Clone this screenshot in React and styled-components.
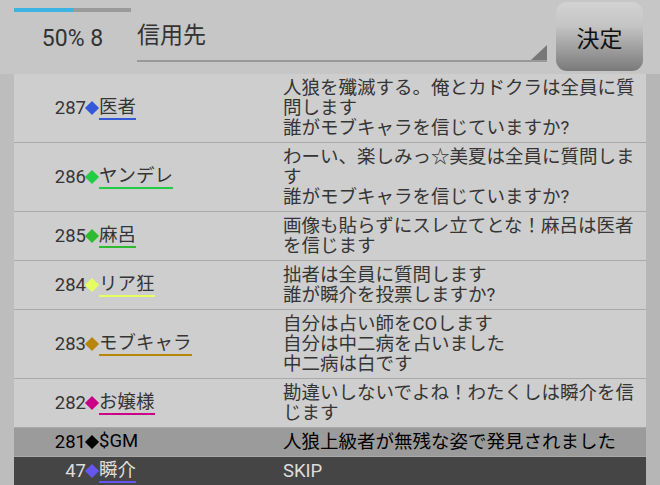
import React from 'react'
import styled, { createGlobalStyle } from 'styled-components'

const GlobalStyle = createGlobalStyle`
  body {
    margin: 0;
    background: #c6c6c6;
    font-family: Roboto, "Noto Sans CJK JP", sans-serif;
    color: #333;
    overflow: hidden;
  }
`

const Page = styled.div`
  width: 660px;
  height: 485px;
  overflow: hidden;
  display: flex;
  flex-direction: column;
`

const Header = styled.div`
  height: 74px;
  display: flex;
  align-items: flex-start;
  flex-shrink: 0;
`

const Progress = styled.div`
  width: 117px;
  margin-left: 14px;
  padding-top: 8px;
  display: flex;
  flex-direction: column;
  align-items: stretch;
`

const Bar = styled.div`
  height: 4px;
  background: #9a9a9a;
  display: flex;
`

const Fill = styled.div`
  height: 100%;
  background: #3db3e4;
`

const Percent = styled.div`
  text-align: center;
  font-size: 23px;
  line-height: 27px;
  margin-top: 13px;
  color: #333;
`

const Spinner = styled.div`
  flex: 1;
  margin-left: 6px;
  height: 62px;
  box-sizing: border-box;
  padding-top: 5px;
  border-bottom: 2px solid #999;
  display: flex;
  align-items: center;
  font-size: 23px;
  color: #333;
`

const SpinnerLabel = styled.span`
  flex: 1;
`

const Corner = styled.svg`
  align-self: flex-end;
  width: 16px;
  height: 15px;
  display: block;
`

const Button = styled.div`
  width: 87px;
  height: 69px;
  margin: 2px 17px 0 9px;
  border-radius: 11px;
  background: linear-gradient(#d3d3d3 0%, #c4c4c4 35%, #7a7a7a 100%);
  display: flex;
  align-items: center;
  justify-content: center;
  font-size: 23px;
  color: #111;
`

const Body = styled.div`
  flex: 1;
  display: flex;
`

const Gutter = styled.div`
  width: ${p => p.$w}px;
  background: ${p => p.$bg};
`

const List = styled.div`
  width: 632px;
  background: #cecece;
`

const Row = styled.div`
  display: grid;
  grid-template-columns: 269px 1fr;
  align-items: center;
  border-bottom: 1px solid #a9a9a9;
  background: ${p => (p.$kind === 'gm' ? '#9b9b9b' : p.$kind === 'skip' ? '#454545' : '#cecece')};
  color: ${p => (p.$kind === 'gm' ? '#000' : p.$kind === 'skip' ? '#ddd' : '#353535')};
  min-height: ${p => (p.$kind === 'skip' ? 24 : 27)}px;
  font-size: 18.5px;
`

const Who = styled.div`
  display: flex;
  align-items: center;
`

const Num = styled.span`
  width: 72px;
  text-align: right;
`

const Diamond = styled.span`
  display: inline-block;
  width: 10px;
  height: 10px;
  margin: 0 2px 0 1px;
  background: ${p => p.$color};
  transform: rotate(45deg);
`

const Name = styled.span`
  line-height: 22px;
  border-bottom: 2px solid ${p => p.$line || 'transparent'};
`

const Msg = styled.div`
  padding: 4px 8px 4px 0;
  line-height: 20px;
  white-space: pre-line;
`

const Filler = styled.div`
  height: 20px;
  background: #9b9b9b;
`

const rows = [
  { no: 287, color: '#3358d8', name: '医者', text: '人狼を殲滅する。俺とカドクラは全員に質問します\n誰がモブキャラを信じていますか?' },
  { no: 286, color: '#22cc44', name: 'ヤンデレ', text: 'わーい、楽しみっ☆美夏は全員に質問します\n誰がモブキャラを信じていますか?' },
  { no: 285, color: '#2fbb2f', name: '麻呂', text: '画像も貼らずにスレ立てとな！麻呂は医者を信じます' },
  { no: 284, color: '#e6ff60', name: 'リア狂', text: '拙者は全員に質問します\n誰が瞬介を投票しますか?' },
  { no: 283, color: '#b8860b', name: 'モブキャラ', text: '自分は占い師をCOします\n自分は中二病を占いました\n中二病は白です' },
  { no: 282, color: '#cc0088', name: 'お嬢様', text: '勘違いしないでよね！わたくしは瞬介を信じます' },
  { no: 281, color: '#000', name: '$GM', text: '人狼上級者が無残な姿で発見されました', kind: 'gm', noLine: true },
  { no: 47, color: '#6655ee', name: '瞬介', text: 'SKIP', kind: 'skip' }
]

export default () => {
  return (
    <Page>
      <GlobalStyle />
      <Header>
        <Progress>
          <Bar>
            <Fill style={{ width: '50%' }} />
          </Bar>
          <Percent>50% 8</Percent>
        </Progress>
        <Spinner>
          <SpinnerLabel>信用先</SpinnerLabel>
          <Corner viewBox='0 0 16 15'>
            <polygon points='16,0 16,15 0,15' fill='#777' />
          </Corner>
        </Spinner>
        <Button>決定</Button>
      </Header>
      <Body>
        <Gutter $w={14} $bg='#bdbdbd' />
        <List>
          {rows.map(r => (
            <Row key={r.no} $kind={r.kind}>
              <Who>
                <Num>{r.no}</Num>
                <Diamond $color={r.color} />
                <Name $line={r.noLine ? null : r.color}>{r.name}</Name>
              </Who>
              <Msg>{r.text}</Msg>
            </Row>
          ))}
          <Filler />
        </List>
        <Gutter $w={14} $bg='#b6b6b6' />
      </Body>
    </Page>
  )
}
